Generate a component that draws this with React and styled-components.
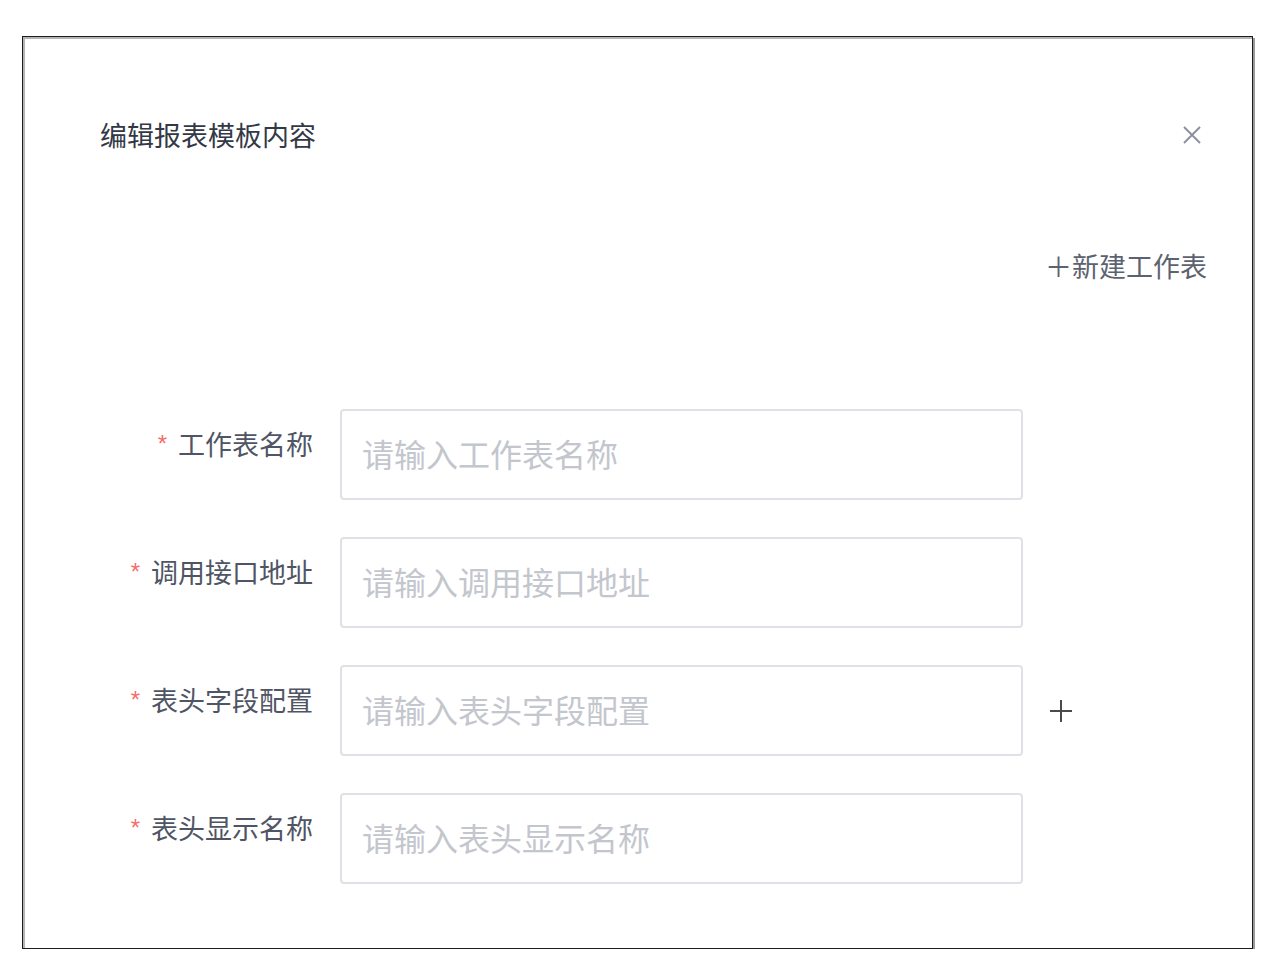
import React from "react";
import styled, { createGlobalStyle } from "styled-components";

const GlobalStyle = createGlobalStyle`
  html, body {
    margin: 0;
    padding: 0;
    background: #ffffff;
  }
  body {
    font-family: "Noto Sans CJK SC", "Noto Sans", sans-serif;
  }
  * { box-sizing: border-box; }
`;

const Frame = styled.div`
  margin: 36px 0 0 22px;
  width: 1231px;
  height: 913px;
  border: 1px solid #1c1c1c;
  box-shadow: inset 2px 2px 0 #b4b4b4, 2px 2px 0 #9a9a9a;
  background: #fff;
  display: flex;
  flex-direction: column;
`;

const Header = styled.div`
  margin-top: 78px;
  padding: 0 51px 0 77px;
  display: flex;
  align-items: center;
  justify-content: space-between;
  height: 40px;
`;

const Title = styled.div`
  font-size: 27px;
  line-height: 40px;
  color: #333846;
`;

const CloseButton = styled.button`
  border: 0;
  background: none;
  padding: 0;
  width: 18px;
  height: 18px;
  display: flex;
  cursor: pointer;
  color: #8c919e;
`;

const Toolbar = styled.div`
  margin-top: 91px;
  padding-right: 45px;
  display: flex;
  justify-content: flex-end;
`;

const AddSheet = styled.div`
  font-size: 27px;
  line-height: 40px;
  color: #5d6270;
  display: flex;
  align-items: center;
  cursor: pointer;
`;

const Form = styled.div`
  margin-top: 123px;
  display: flex;
  flex-direction: column;
  gap: 37px;
`;

const Row = styled.div`
  display: grid;
  grid-template-columns: 290px 683px 48px;
  column-gap: 27px;
  align-items: start;
`;

const Label = styled.label`
  display: flex;
  justify-content: flex-end;
  align-items: flex-start;
  padding-top: 15px;
  font-size: 27px;
  line-height: 40px;
  color: #4f5564;
`;

const Required = styled.span`
  font-family: "Liberation Sans", sans-serif;
  font-size: 24px;
  line-height: 40px;
  color: #f56c6c;
  margin-right: 11px;
`;

const Input = styled.input`
  width: 683px;
  height: 91px;
  border: 2px solid #dfe1e6;
  border-radius: 4px;
  padding: 0 20px 4px;
  font-family: "Noto Sans CJK SC", "Noto Sans", sans-serif;
  font-size: 32px;
  color: #4f5564;
  outline: none;
  &::placeholder {
    color: #c3c6cd;
  }
`;

const PlusButton = styled.button`
  border: 0;
  background: none;
  padding: 0;
  margin-left: -1px;
  height: 91px;
  width: 24px;
  display: flex;
  align-items: center;
  color: #4a4a4a;
  cursor: pointer;
`;

const fields = [
  { label: "工作表名称", placeholder: "请输入工作表名称" },
  { label: "调用接口地址", placeholder: "请输入调用接口地址" },
  { label: "表头字段配置", placeholder: "请输入表头字段配置", add: true },
  { label: "表头显示名称", placeholder: "请输入表头显示名称" },
];

const PlusIcon = ({ size = 24, stroke = 2 }) => (
  <svg width={size} height={size} viewBox="0 0 24 24" fill="none">
    <path d="M12 1v22M1 12h22" stroke="currentColor" strokeWidth={stroke} />
  </svg>
);

export default function App() {
  return (
    <>
      <GlobalStyle />
      <Frame>
        <Header>
          <Title>编辑报表模板内容</Title>
          <CloseButton aria-label="关闭">
            <svg width="18" height="18" viewBox="0 0 18 18" fill="none">
              <path d="M1 1l16 16M17 1L1 17" stroke="currentColor" strokeWidth="2" />
            </svg>
          </CloseButton>
        </Header>
        <Toolbar>
          <AddSheet>＋新建工作表</AddSheet>
        </Toolbar>
        <Form>
          {fields.map((f) => (
            <Row key={f.label}>
              <Label>
                <Required>*</Required>
                {f.label}
              </Label>
              <Input placeholder={f.placeholder} />
              {f.add ? (
                <PlusButton aria-label="添加">
                  <PlusIcon size={24} stroke={2} />
                </PlusButton>
              ) : (
                <span />
              )}
            </Row>
          ))}
        </Form>
      </Frame>
    </>
  );
}
